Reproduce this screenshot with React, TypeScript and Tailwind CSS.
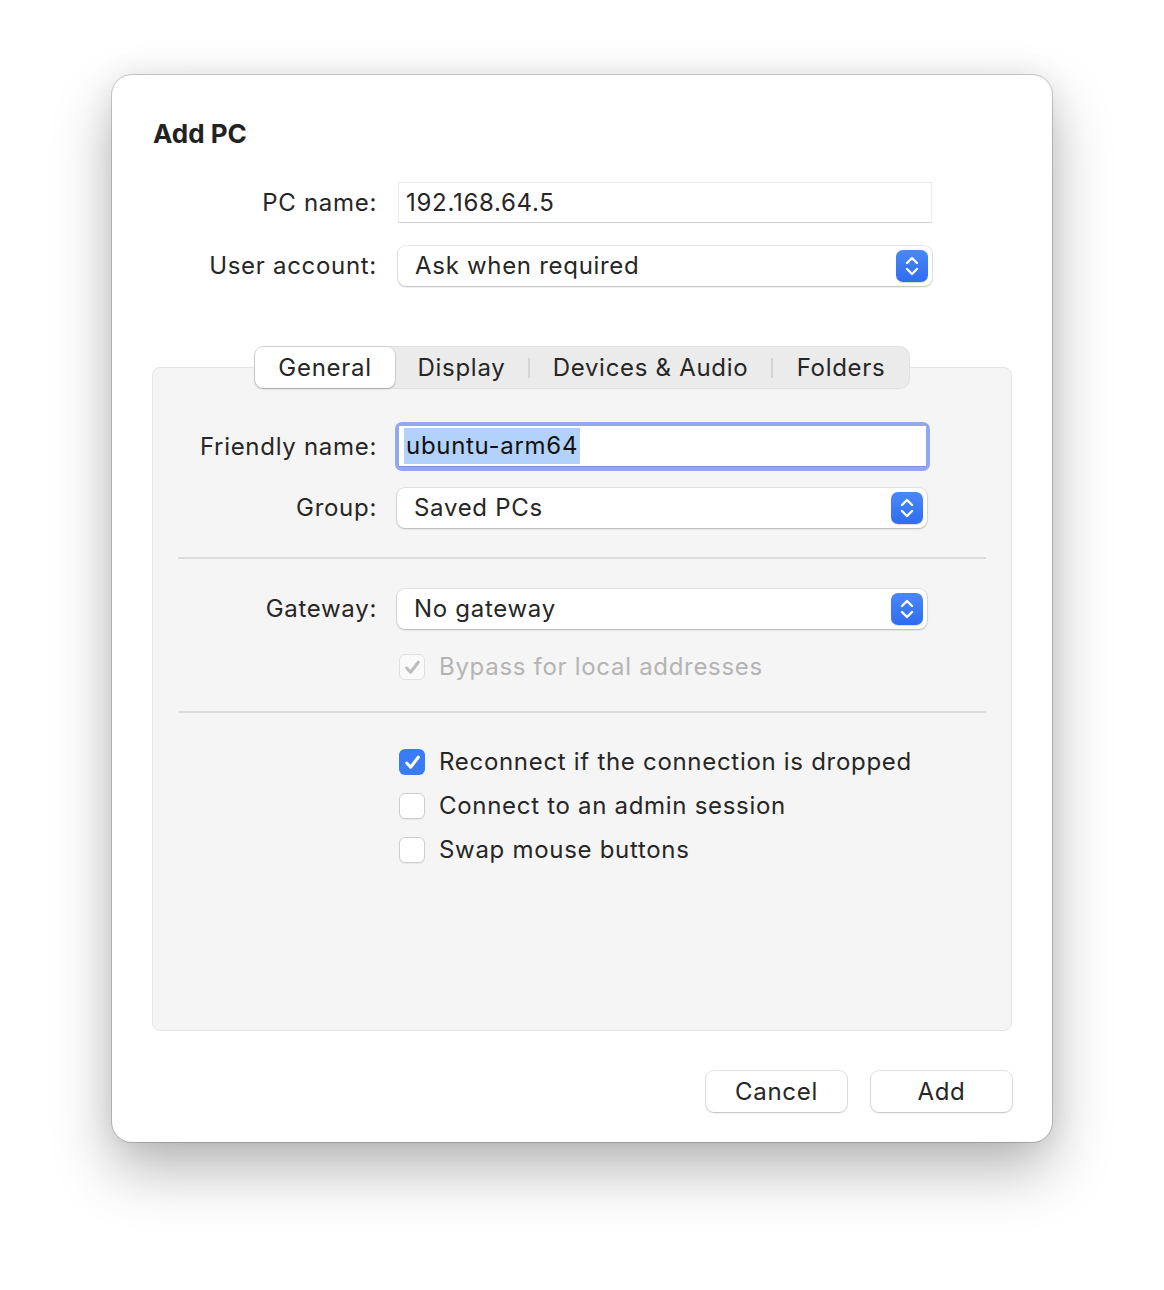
import React from 'react';

const font = { fontFamily: 'Inter, "Noto Sans", sans-serif' };

// Blue up/down stepper on the right of a popup button
const Stepper: React.FC = () => (
    <div className="w-[32px] h-[32px] rounded-[7px] bg-gradient-to-b from-[#4a88f8] to-[#2f6cf0] flex items-center justify-center shadow-[0_1px_1px_rgba(0,0,0,0.15)]">
        <svg width="16" height="22" viewBox="0 0 16 22" fill="none">
            <path d="M3 8 L8 3 L13 8" stroke="white" strokeWidth="2.4" strokeLinecap="round" strokeLinejoin="round" />
            <path d="M3 14 L8 19 L13 14" stroke="white" strokeWidth="2.4" strokeLinecap="round" strokeLinejoin="round" />
        </svg>
    </div>
);

const Popup: React.FC<{ value: string; width: string }> = ({ value, width }) => (
    <div className={`${width} h-[40px] rounded-[8px] bg-white flex items-center justify-between pl-[17px] pr-[4px] shadow-[0_0_0_1px_rgba(0,0,0,0.08),0_1px_2px_rgba(0,0,0,0.2)]`}>
        <span className="text-[24px] tracking-[0.7px] text-[#262626]">{value}</span>
        <Stepper />
    </div>
);

type CheckState = 'on' | 'off' | 'disabled';

const CheckRow: React.FC<{ label: string; state: CheckState }> = ({ label, state }) => {
    const box =
        state === 'on'
            ? 'bg-[#3a7bf7]'
            : state === 'disabled'
              ? 'bg-[#fafafa] border border-[#e0e0e0]'
              : 'bg-white border border-[#cdcdcd] shadow-[0_1px_1px_rgba(0,0,0,0.06)]';
    return (
        <div className="flex items-center h-[26px]">
            <div className={`w-[26px] h-[26px] rounded-[6px] flex items-center justify-center ${box}`}>
                {state !== 'off' && (
                    <svg width="19" height="19" viewBox="0 0 18 18" fill="none">
                        <path
                            d="M3.5 9.5 L7.2 13.5 L14.5 4"
                            stroke={state === 'on' ? 'white' : '#bdbdbd'}
                            strokeWidth="2.9"
                            strokeLinecap="round"
                            strokeLinejoin="round"
                        />
                    </svg>
                )}
            </div>
            <span
                className={`ml-[14px] text-[24px] tracking-[0.7px] ${state === 'disabled' ? 'text-[#b4b4b4]' : 'text-[#262626]'}`}
            >
                {label}
            </span>
        </div>
    );
};

const tabs = [
    { name: 'General', w: 'w-[140px]' },
    { name: 'Display', w: 'w-[133px]' },
    { name: 'Devices & Audio', w: 'w-[241px]' },
    { name: 'Folders', w: 'w-[136px]' },
];

const App: React.FC = () => {
    return (
        <div className="w-[1164px] min-h-[1290px] bg-white pt-[75px] pl-[112px]" style={font}>
            <div className="w-[940px] h-[1067px] rounded-[20px] bg-white flex flex-col px-[40px] shadow-[0_0_0_1px_rgba(0,0,0,0.18),0_0_30px_rgba(0,0,0,0.08),0_28px_60px_rgba(0,0,0,0.28)]">
                <h1 className="mt-[44px] pl-[1px] text-[26px] leading-[30px] font-bold text-[#222]">Add PC</h1>

                {/* PC name */}
                <div className="mt-[34px] flex items-center">
                    <span className="w-[225px] text-right text-[24px] tracking-[0.7px] text-[#262626]">PC name:</span>
                    <div className="ml-[22px] w-[532px] h-[39px] bg-white flex items-center pl-[7px] shadow-[0_0_0_1px_rgba(0,0,0,0.08),0_1px_0_rgba(0,0,0,0.12)]">
                        <span className="text-[24px] tracking-[0.7px] text-[#262626]">192.168.64.5</span>
                    </div>
                </div>

                {/* User account */}
                <div className="mt-[24px] flex items-center">
                    <span className="w-[225px] text-right text-[24px] tracking-[0.7px] text-[#262626]">User account:</span>
                    <div className="ml-[21px]">
                        <Popup value="Ask when required" width="w-[534px]" />
                    </div>
                </div>

                {/* Tabs */}
                <div className="mt-[60px] mx-auto z-10 flex items-center h-[43px] rounded-[10px] bg-[#ebebeb] p-[1px] shadow-[inset_0_0_0_1px_rgba(0,0,0,0.04)]">
                    {tabs.map((t, i) => (
                        <React.Fragment key={t.name}>
                            {i > 1 && <div className="w-[2px] h-[20px] bg-[#d6d6d6]" />}
                            <div
                                className={`${t.w} h-[41px] flex items-center justify-center text-[24px] tracking-[0.7px] text-[#262626] ${
                                    i === 0 ? 'bg-white rounded-[8px] shadow-[0_0_0_1px_rgba(0,0,0,0.06),0_1px_2px_rgba(0,0,0,0.22)]' : ''
                                }`}
                            >
                                {t.name}
                            </div>
                        </React.Fragment>
                    ))}
                </div>

                <div className="-mt-[22px] h-[664px] rounded-[8px] bg-[#f5f5f5] border border-[#e5e5e5] pt-[54px] flex flex-col">
                    {/* Friendly name */}
                    <div className="flex items-center">
                        <span className="w-[224px] text-right text-[24px] tracking-[0.7px] text-[#262626]">Friendly name:</span>
                        <div className="ml-[18px] w-[535px] h-[49px] rounded-[7px] bg-[#93a7ef] p-[4px]">
                            <div className="w-full h-full bg-white flex items-center pl-[5px] border-b border-[#7f92d8]">
                                <span className="text-[24px] tracking-[0.7px] text-[#111] bg-[#b3d2fb] px-[2px]">ubuntu-arm64</span>
                            </div>
                        </div>
                    </div>

                    {/* Group */}
                    <div className="mt-[17px] flex items-center">
                        <span className="w-[224px] text-right text-[24px] tracking-[0.7px] text-[#262626]">Group:</span>
                        <div className="ml-[20px]">
                            <Popup value="Saved PCs" width="w-[530px]" />
                        </div>
                    </div>

                    <div className="mt-[29px] mx-[25px] h-[2px] bg-[#dcdcdc]" />

                    {/* Gateway */}
                    <div className="mt-[30px] flex items-center">
                        <span className="w-[224px] text-right text-[24px] tracking-[0.7px] text-[#262626]">Gateway:</span>
                        <div className="ml-[20px]">
                            <Popup value="No gateway" width="w-[530px]" />
                        </div>
                    </div>

                    <div className="mt-[25px] ml-[246px]">
                        <CheckRow label="Bypass for local addresses" state="disabled" />
                    </div>

                    <div className="mt-[31px] mx-[25px] h-[2px] bg-[#dcdcdc]" />

                    <div className="mt-[36px] ml-[246px] flex flex-col gap-[18px]">
                        <CheckRow label="Reconnect if the connection is dropped" state="on" />
                        <CheckRow label="Connect to an admin session" state="off" />
                        <CheckRow label="Swap mouse buttons" state="off" />
                    </div>
                </div>

                {/* Buttons */}
                <div className="mt-[40px] flex justify-end gap-[24px]">
                    {['Cancel', 'Add'].map((b) => (
                        <button
                            key={b}
                            className="w-[141px] h-[41px] rounded-[8px] bg-white text-[24px] tracking-[0.7px] text-[#262626] shadow-[0_0_0_1px_rgba(0,0,0,0.1),0_1px_2px_rgba(0,0,0,0.15)]"
                        >
                            {b}
                        </button>
                    ))}
                </div>
            </div>
        </div>
    );
};

export default App;
